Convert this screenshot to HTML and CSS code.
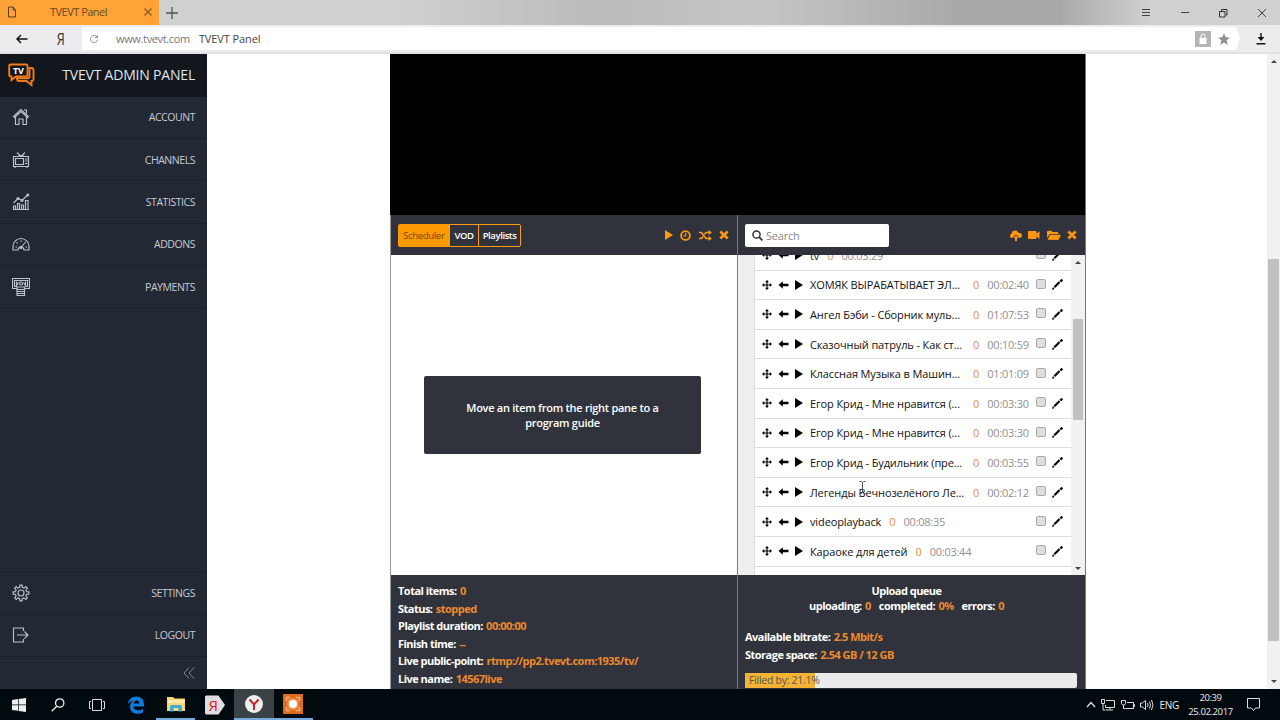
FILE: index.html
```html
<!DOCTYPE html>
<html lang="en">
<head>
    <meta charset="UTF-8" />
    <title>TVEVT Panel</title>
    <link rel="stylesheet" href="styles.css">
</head>
<body>
    <!-- ===== ICONS ===== -->
    <svg class="defs" width="0" height="0">
        <symbol id="move" viewBox="0 0 10 10"><path d="M5 0l2 2.200H5.600v2.200h2.200V3L10 5 7.800 7V5.600H5.600v2.200H7L5 10 3 7.800h1.400V5.600H2.200V7L0 5l2.200-2v1.400h2.200V2.200H3z"/></symbol>
        <symbol id="left" viewBox="0 0 10 8"><path d="M0 4L4.300.3v2.500H10v2.400H4.300v2.500z"/></symbol>
        <symbol id="play" viewBox="0 0 8 10"><path d="M0 0L8 5 0 10z"/></symbol>
        <symbol id="pencil" viewBox="0 0 12 12"><path d="M0 12l1-3.200L2.900 11zM1.700 8.300l5.800-5.800 1.500 1.500L3.400 9.900zM8.200 1.800L9.900.2q.6-.4 1.200.2l.5.6q.5.6 0 1.100L10 3.600z"/></symbol>
        <symbol id="cross" viewBox="0 0 10 10"><path d="M2.300.5L5 3.200 7.700.5l1.900 1.900L7 5l2.600 2.600-1.900 1.900L5 6.800 2.300 9.500.4 7.600 3 5 .4 2.400z"/></symbol>
    </svg>

    <!-- ===== BROWSER ===== -->
    <div class="tabbar">
        <div class="tab">
            <svg width="10" height="12" viewBox="0 0 10 12"><path d="M1.500 1h4.500l2.500 3v7h-7zM6 1v3h2.500" fill="none" stroke="#55401f"/></svg>
            <span>TVEVT Panel</span>
            <svg width="8" height="8" viewBox="0 0 8 8"><path d="M.5.5l7 7M7.500.5l-7 7" stroke="#8a5a1d" stroke-width="1.200"/></svg>
        </div>
        <svg class="newtab" width="12" height="12" viewBox="0 0 12 12"><path d="M6 0v12M0 6h12" stroke="#555" stroke-width="1.300"/></svg>
        <div class="winbtns">
            <svg width="10" height="10" viewBox="0 0 10 10"><path d="M1 1.500h8M1 4.500h8M1 7.500h8" stroke="#444"/></svg>
            <svg width="10" height="10" viewBox="0 0 10 10"><path d="M1 4.500h8" stroke="#444"/></svg>
            <svg width="10" height="10" viewBox="0 0 10 10"><path d="M1.500 3.500h5.500v5.500h-5.500zM3.500 3V1.500H9v5.500H7.500" fill="none" stroke="#333"/></svg>
            <svg width="10" height="10" viewBox="0 0 10 10"><path d="M1 1l8 8M9 1l-8 8" stroke="#444"/></svg>
        </div>
    </div>
    <div class="toolbar">
        <svg class="back" width="12" height="10" viewBox="0 0 12 10"><path d="M11.500 5H1.500M5 1L1 5l4 4" fill="none" stroke="#111" stroke-width="1.500"/></svg>
        <span class="ya">Я</span>
        <div class="address">
            <svg width="10" height="10" viewBox="0 0 10 10"><path d="M8.200 3.200A3.600 3.600 0 1 0 8.600 5.500M8.500.8v2.700H5.800" fill="none" stroke="#999"/></svg>
            <span class="host">www.tvevt.com</span>
            <span class="title">TVEVT Panel</span>
            <svg class="lock" width="16" height="16" viewBox="0 0 16 16"><path d="M0 0h16v16H0z" fill="#b5b5b5"/><path d="M4.500 7h7v6h-7z" fill="#fff"/><path d="M6 7V5q0-2 2-2t2 2v2" fill="none" stroke="#fff"/></svg>
            <svg class="star" width="12" height="12" viewBox="0 0 12 12"><path d="M6 0l1.600 4.200L12 4.500 8.600 7.300 9.700 12 6 9.400 2.300 12l1.100-4.700L0 4.500l4.400-.3z" fill="#8f8f8f"/></svg>
        </div>
        <svg class="download" width="10" height="12" viewBox="0 0 10 12"><path d="M4.300 0h1.400v4H8.500L5 8 1.500 4h2.800zM.5 10h9v1.500h-9z" fill="#111"/></svg>
    </div>

    <div class="page">
        <!-- ===== SIDEBAR ===== -->
        <nav class="sidebar">
            <div class="brand">
                <svg width="28" height="26" viewBox="0 0 28 26" fill="none" stroke="#ef7d1a" stroke-width="1.900"><path d="M3 2.500h15q1.500 0 1.500 1.500v9q0 1.500-1.500 1.500H8L3.500 18v-3.500Q1.200 14.500 1.200 13V4q0-1.500 1.800-1.500z"/><path d="M21.500 6H23q2.500 0 2.500 2v9q0 2-2 2v4L18.500 19H11q-2 0-2-2v-.8h10.500q2 0 2-2z"/><text x="5" y="11.800" class="logo-text">TV</text></svg>
                <span>TVEVT ADMIN PANEL</span>
            </div>
            <a class="item"><svg width="18" height="18" viewBox="0 0 18 18"><path d="M1.500 8.500L9 1.500l7.500 7-1 1L9 3.500l-6.500 6zM3.500 9v7.500H7V11h4v5.500h3.500V9M12 2h2.500v3.500"/></svg>ACCOUNT</a>
            <a class="item"><svg width="18" height="18" viewBox="0 0 18 18"><path d="M1.500 5.500h15v10h-15zM3.500 7.500h8v6h-8zM3 15.500v1.500M15 15.500v1.500M9 5.500l-4-4M9 5.500l4-4M6.500 4.500h5M13 8h2.500M13 10h2.500M13 12.500h2.500"/></svg>CHANNELS</a>
            <a class="item"><svg width="18" height="18" viewBox="0 0 18 18"><path d="M1 16.500h16M1.500 16v-3h2v3M5.500 16v-5.500h2V16M9.500 16v-4h2v4M13.500 16V7.500h2.500V16M1.500 10L6 5.500l4 2L16 1.500"/><circle cx="6" cy="5.500" r="1"/><circle cx="10" cy="7.500" r="1"/><circle cx="15.800" cy="2" r="1"/></svg>STATISTICS</a>
            <a class="item"><svg width="18" height="18" viewBox="0 0 18 18"><path d="M1 15v-3.500a8 8 0 0 1 16 0V15h-5a3 3 0 0 0-6 0zM3.500 12h1.500M13.500 12H15M4.500 7.500l1.200 1M9 5.500V7M13.500 7L9 12.500"/><circle cx="9" cy="12.500" r="1.200"/></svg>ADDONS</a>
            <a class="item"><svg width="18" height="18" viewBox="0 0 18 18"><path d="M5 10.500H.5V.5h17v10H13M4.500 8.500h-2v-6h13v6h-2M5 9h7.500v8.500H5zM5 11.500h7.500M5 13.500h7.500M5 15.500h7.500"/><circle cx="9" cy="5.500" r="1.500"/><path d="M4.500 3.500v4l2-3M13.500 3.500v4l-2-3"/></svg>PAYMENTS</a>
            <div class="spacer"></div>
            <a class="item first"><svg width="18" height="18" viewBox="0 0 18 18"><path d="M7.700 3.400 7.900 1.100 10.100 1.100 10.300 3.400 12 4.100 13.800 2.600 15.400 4.200 13.900 6 14.600 7.700 16.900 7.900 16.900 10.100 14.600 10.300 13.900 12 15.400 13.800 13.800 15.400 12 13.900 10.300 14.600 10.100 16.900 7.900 16.900 7.700 14.600 6 13.900 4.200 15.400 2.600 13.800 4.100 12 3.400 10.300 1.100 10.100 1.100 7.900 3.400 7.700 4.100 6 2.600 4.200 4.200 2.600 6 4.100Z"/><circle cx="9" cy="9" r="3"/></svg>SETTINGS</a>
            <a class="item"><svg width="18" height="18" viewBox="0 0 18 18"><path d="M11.500 5V2H1.500v14h10v-3M5 9h11M12.500 5.500L16 9l-3.500 3.500"/></svg>LOGOUT</a>
            <div class="collapse"><svg width="12" height="12" viewBox="0 0 12 12"><path d="M6 .5L1 6l5 5.500M11 .5L6 6l5 5.500" fill="none" stroke="#858a96"/></svg></div>
        </nav>

        <!-- ===== CONTENT ===== -->
        <main class="content">
            <div class="panel">
                <div class="video"></div>
                <div class="columns">
                    <section class="col">
                        <div class="bar">
                            <div class="tabs"><b class="active">Scheduler</b><b>VOD</b><b>Playlists</b></div>
                            <div class="actions left-actions">
                                <svg width="8" height="10"><use href="#play"/></svg>
                                <svg width="11" height="11" viewBox="0 0 11 11" fill="none" stroke="currentColor"><circle cx="5.500" cy="5.500" r="4.400" stroke-width="1.800"/><path d="M5.700 2.800v3H3.500" stroke-width="1.200"/></svg>
                                <svg width="13" height="11" viewBox="0 0 13 11"><path d="M0 2.500h2.500l4.500 6h3M0 8.500h2.500l1.500-2M5.500 4.200L7 2.500h3" fill="none" stroke="currentColor" stroke-width="1.700"/><path d="M9.500 0L13 2.500 9.500 5zM9.500 6L13 8.500 9.500 11z"/></svg>
                                <svg width="10" height="10"><use href="#cross"/></svg>
                            </div>
                        </div>
                        <div class="body">
                            <div class="hint">Move an item from the right pane to a<br>program guide</div>
                        </div>
                        <div class="info">
                            <p>Total items: <i>0</i></p>
                            <p>Status: <i>stopped</i></p>
                            <p>Playlist duration: <i>00:00:00</i></p>
                            <p>Finish time: <i>--</i></p>
                            <p>Live public-point: <i>rtmp://pp2.tvevt.com:1935/tv/</i></p>
                            <p>Live name: <i>14567live</i></p>
                        </div>
                    </section>
                    <section class="col">
                        <div class="bar">
                            <div class="search">
                                <svg width="11" height="11" viewBox="0 0 11 11" fill="none" stroke="#333"><circle cx="4.500" cy="4.500" r="3.600" stroke-width="1.500"/><path d="M7.200 7.200L10.300 10.300" stroke-width="1.800"/></svg>
                                <span>Search</span>
                            </div>
                            <div class="actions right-actions">
                                <svg width="12" height="11" viewBox="0 0 12 11"><path d="M2.700 8Q0 8 0 5.700 0 4 1.700 3.400 2.200.6 5 .6q2.500 0 3.400 2.200 3.300-.1 3.600 2.800 0 2.400-2.700 2.400H8.500L9 7.500 6 4.200 3 7.500zM6 5.300L8.400 8H7v3H5V8H3.600z"/></svg>
                                <svg width="12" height="10" viewBox="0 0 12 10"><path d="M1 1h6.500q1 0 1 1v1.700L11.500 1v8L8.500 6.300V8q0 1-1 1H1Q0 9 0 8V2q0-1 1-1z"/></svg>
                                <svg width="14" height="11" viewBox="0 0 14 11"><path d="M0 8V2q0-1.200 1.200-1.200H4q1 0 1.200 1.200H10q1.300 0 1.300 1.200V4H4Q2.500 4 1.800 5.300zM.5 9.800L2.600 5.500q.4-.8 1.400-.8h9.300q.7 0 .4.800l-1.900 3.700q-.4.800-1.300.8z"/></svg>
                                <svg width="10" height="10"><use href="#cross"/></svg>
                            </div>
                        </div>
                        <div class="body library">
                            <div class="rows" id="rows"></div>
                            <div class="scroll inner"><div class="thumb"></div></div>
                            <svg class="caret" width="7" height="13" viewBox="0 0 7 13"><path d="M.5.5h2l1 1 1-1h2M3.500 1v11M.5 12.500h2l1-1 1 1h2" fill="none" stroke="#555"/></svg>
                        </div>
                        <div class="info">
                            <div class="queue">Upload queue<br><span>uploading: <i>0</i></span><span>completed: <i>0%</i></span><span>errors: <i>0</i></span></div>
                            <p>Available bitrate: <i>2.5 Mbit/s</i></p>
                            <p>Storage space: <i>2.54 GB / 12 GB</i></p>
                            <div class="storage"><div class="fill">Filled by: 21.1%</div></div>
                        </div>
                    </section>
                </div>
            </div>
        </main>
        <div class="scroll outer"><div class="thumb"></div></div>
    </div>

    <!-- ===== TASKBAR ===== -->
    <footer class="taskbar">
        <div class="app"><svg width="14" height="14" viewBox="0 0 14 14" fill="#fff"><path d="M0 2l6-.9v5.500H0zM6.700 1L14 0v6.600H6.700zM0 7.300h6v5.500L0 12zM6.700 7.300H14V14l-7.300-1z"/></svg></div>
        <div class="app"><svg width="14" height="14" viewBox="0 0 14 14" fill="none" stroke="#eee" stroke-width="1.300"><circle cx="8.700" cy="5" r="4.200"/><path d="M5.700 8.200L.7 13.300"/></svg></div>
        <div class="app"><svg width="16" height="12" viewBox="0 0 16 12" fill="none" stroke="#ddd"><path d="M3.500.5h9v11h-9zM2 2.500H.5v7H2M14 2.500h1.500v7H14"/></svg></div>
        <div class="app"><svg width="16" height="18" viewBox="0 0 16 18"><path d="M0 8Q1 .5 8.300.5 15.700.7 16 8.300V10.500H5.500q.3 3.700 4.500 3.800 2.800 0 5-1.300v3.600Q12.500 18 9 17.800 2.300 17.300 2 10.700 2 6.500 6 4.700 2.200 5.200 0 8zM5.700 7.500h5.500Q11.200 4.500 8.700 4.500 6.200 4.600 5.700 7.500z" fill="#0c7bdc"/></svg></div>
        <div class="app open"><svg width="18" height="16" viewBox="0 0 18 16"><path d="M0 1h6l1.500 1.500H18V15H0z" fill="#f7d774"/><path d="M1 4h16v3H1z" fill="#fdebae"/><path d="M3 15.500V11q0-2 2-2h8q2 0 2 2v4.500h-3.500V12h-5v3.500z" fill="#3fa9d8"/></svg></div>
        <div class="app"><svg width="20" height="20" viewBox="0 0 20 20"><path d="M0 2q0-1.500 1.500-1.500h12L20 10l-6.500 9.500h-12Q0 19.500 0 18z" fill="#dedede"/><text x="3.500" y="15.500" class="ya-red">Я</text></svg></div>
        <div class="app open current"><svg width="18" height="18" viewBox="0 0 18 18"><circle cx="9" cy="9" r="9" fill="#eee"/><path d="M4.500 4.500L9 9.500l4.500-5M9 9v6" fill="none" stroke="#c4232c" stroke-width="2"/></svg></div>
        <div class="app open"><svg width="20" height="20" viewBox="0 0 20 20"><path d="M0 0h20v20H0z" fill="#dd6b20"/><path d="M3.500 7V3.500H7M13 3.500h3.500V7M16.500 13v3.500H13M7 16.500H3.500V13" fill="none" stroke="#f3ae78" stroke-width="1.500"/><circle cx="10" cy="10" r="6" fill="#f09550"/><circle cx="10" cy="10" r="4" fill="#fff"/></svg></div>
        <div class="tray">
            <svg width="10" height="7" viewBox="0 0 10 7"><path d="M1 6l4-4.500L9 6" fill="none" stroke="#ddd" stroke-width="1.300"/></svg>
            <svg width="14" height="12" viewBox="0 0 14 12" fill="none" stroke="#ddd"><path d="M5 1.500h8.500v7H4.500V6M9 8.500v2M5 11h7M.5.5h3v4h-3zM2 4.500V11h2.500"/></svg>
            <svg width="14" height="12" viewBox="0 0 14 12" fill="none" stroke="#ddd"><path d="M6 3.500h6.500v6h-8M12.500 5.500h1v2h-1M.5 1.500h4v3l-1 1.500h-2L.5 4.500zM2.500 6v3.500h2"/></svg>
            <svg width="14" height="12" viewBox="0 0 14 12" fill="none" stroke="#ddd"><path d="M.5 4h2L5.500 1.500v9L2.500 8h-2zM7.500 4q1 2 0 4M9.500 2.500q2 3.500 0 7M11.500 1q3 5 0 10"/></svg>
            <span class="lang">ENG</span>
            <span class="clock">20:39<br>25.02.2017</span>
            <svg width="13" height="14" viewBox="0 0 13 14" fill="none" stroke="#ddd"><path d="M.5.5h12v9.500H8.500L6.500 12.500 4.500 10H.5z"/></svg>
        </div>
    </footer>

    <script>
        const items = [
            ["tv", "00:03:29"],
            ["ХОМЯК ВЫРАБАТЫВАЕТ ЭЛ...", "00:02:40"],
            ["Ангел Бэби - Сборник муль...", "01:07:53"],
            ["Сказочный патруль - Как ст...", "00:10:59"],
            ["Классная Музыка в Машин...", "01:01:09"],
            ["Егор Крид - Мне нравится (...", "00:03:30"],
            ["Егор Крид - Мне нравится (...", "00:03:30"],
            ["Егор Крид - Будильник (пре...", "00:03:55"],
            ["Легенды Вечнозелёного Ле...", "00:02:12"],
            ["videoplayback", "00:08:35"],
            ["Караоке для детей", "00:03:44"]
        ];
        const icon = (id, w, h) => `<svg class="${id}" width="${w}" height="${h}"><use href="#${id}"/></svg>`;

        document.getElementById('rows').innerHTML = items.map(([name, time]) => `
            <div class="row">
                ${icon('move', 10, 10)}${icon('left', 11, 8)}${icon('play', 8, 10)}
                <span class="name${name.endsWith('...') ? ' long' : ''}">${name}</span>
                <span class="count">0</span>
                <span class="time">${time}</span>
                <span class="check"></span>
                ${icon('pencil', 11, 11)}
            </div>`).join('') + '<div class="row"></div>';
    </script>
</body>
</html>
```
FILE: styles.css
```css
*{box-sizing:border-box;}
body{
    margin:0;width:1280px;height:720px;overflow:hidden;
    display:flex;flex-direction:column;background:#fff;
    font-family:"Open Sans","Noto Sans",sans-serif;font-size:11px;
}
svg{display:block;flex:none;fill:currentColor;}
svg[fill="none"]{fill:none;}
.defs{position:absolute;}
i{font-style:normal;}
p{margin:0;}

/* Browser */
.tabbar{
    height:25px;flex:none;display:flex;align-items:center;
    background:linear-gradient(90deg,#cfd1cf 0,#cfd1cf 400px,#b9bbb9 600px,#c4c6c4 760px,#a8aaa8 960px,#a8aaa8 1060px,#cfd1cf 1150px);
}
.tab{
    width:159px;height:25px;padding:0 7px 2px;background:#ffa237;
    display:flex;align-items:center;justify-content:space-between;
    color:#6b4a20;letter-spacing:-.5px;
}
.tab span{margin-right:4px;}
.newtab{margin-left:7px;}
.winbtns{margin-left:auto;display:flex;gap:28.500px;padding-right:13.500px;}
.toolbar{
    height:29px;flex:none;display:flex;align-items:center;
    background:#ececee;border-bottom:2px solid #e2e2e2;
}
.back{margin-left:16px;}
.ya{width:14px;margin:0 15px 0 27px;font-size:17px;line-height:20px;color:#333;transform:scaleX(.75);}
.address{
    width:1158px;height:23px;padding-left:7px;background:#fff;
    display:flex;align-items:center;margin-left:-2px;
    clip-path:polygon(0 0,1154px 0,100% 50%,1154px 100%,0 100%);
}
.host{margin-left:17px;color:#777;letter-spacing:-.35px;}
.title{margin-left:9px;color:#444;letter-spacing:-.1px;}
.lock{margin-left:auto;}
.star{margin:0 10px 0 7px;}
.download{margin-left:16px;}

.page{height:635px;flex:none;display:flex;}

/* Sidebar */
.sidebar{
    width:207px;background:#222834;color:#c8ccd4;
    display:flex;flex-direction:column;
}
.brand{
    height:42.500px;flex:none;padding:0 12px 0 8px;background:#14161d;
    display:flex;align-items:center;justify-content:space-between;
    font-size:14px;line-height:18px;color:#dfe5ea;letter-spacing:-.2px;
}
.logo-text{font:bold 9px "Open Sans",sans-serif;fill:#fff;stroke:none;}
.item{
    height:42.400px;flex:none;padding:0 12px;border-bottom:1px solid #1a1f29;
    display:flex;align-items:center;justify-content:space-between;
    font-size:10.500px;letter-spacing:-.45px;
}
.item.first{border-top:1px solid #1a1f29;}
.item svg{fill:none;stroke:#bcc1cb;stroke-width:1.150;}
.spacer{flex:1;}
.collapse{height:32px;flex:none;display:flex;align-items:center;justify-content:flex-end;padding-right:12px;}

/* Panel */
.content{flex:1;display:flex;padding-left:183px;}
.panel{width:696px;display:flex;flex-direction:column;border-right:1px solid #777;}
.video{height:161px;background:#000;}
.columns{flex:1;display:flex;}
.col{width:347px;display:flex;flex-direction:column;}
.col:first-child{width:348px;border-left:1px solid #999;border-right:1px solid #777;}
.bar{
    height:40px;flex:none;padding:0 8px 0 7px;background:#30333c;
    display:flex;align-items:center;justify-content:space-between;
}
.tabs{display:flex;height:23px;border:1px solid #ff9c10;border-radius:2px;}
.tabs b{
    padding:0 4px;line-height:21px;font-size:9.500px;font-weight:600;color:#fff;
    border-left:1px solid #ff9c10;letter-spacing:-.4px;
}
.tabs .active{padding:0 5px 0 4px;background:#ff9900;color:#70491a;font-weight:400;border-left:0;letter-spacing:-.3px;}
.actions{display:flex;align-items:center;color:#ff9713;}
.left-actions{gap:7.500px;}
.right-actions{gap:6.500px;}
.search{
    width:144px;height:23px;padding-left:7px;border-radius:2px;background:#fff;
    display:flex;align-items:center;gap:3px;color:#888;letter-spacing:-.2px;
}
.body{height:320px;flex:none;background:#fff;overflow:hidden;}
.col:first-child .body{display:flex;align-items:center;justify-content:center;padding-right:3px;}
.hint{
    width:277px;height:78px;border-radius:2px;background:#30333c;color:#fff;
    display:flex;align-items:center;justify-content:center;text-align:center;
    font-weight:600;line-height:15px;letter-spacing:-.27px;
}

/* Library */
.library{position:relative;display:flex;padding-left:16px;background:#eee;}
.rows{width:317px;margin-top:-14px;background:#fff;border-left:1px solid #ddd;}
.row{
    height:29.600px;padding:0 8px 0 7px;border-bottom:1px solid #ddd;
    display:flex;align-items:center;color:#000;
}
.row .left{margin-left:6px;}
.row .play{margin:0 7px 0 6px;}
.name{white-space:nowrap;color:#111;letter-spacing:-.12px;font-weight:500;}
.name.long{width:155px;}
.count{margin:0 8px;color:#ee8f35;}
.time{color:#8f8f8f;letter-spacing:-.25px;font-weight:500;}
.check{width:10px;height:10px;margin:-2px 6px 0 auto;border:1px solid #aaa;border-radius:2px;background:#dedede;}
.caret{position:absolute;left:121px;top:226px;}

/* Scrollbars */
.scroll{display:flex;flex-direction:column;align-items:center;background:#f1f1f1;}
.scroll::before,.scroll::after{content:"";border:3px solid transparent;}
.scroll::before{border-bottom-color:#444;border-top:0;}
.scroll::after{border-top-color:#444;border-bottom:0;margin-top:auto;}
.inner{width:14px;padding:6px 0 5px;}
.inner .thumb{width:10px;height:101px;margin-top:55px;background:#c1c1c1;}
.outer{width:13px;padding:6px 0;}
.outer .thumb{width:11px;height:382px;margin-top:196px;background:#c1c1c1;}

/* Info */
.info{flex:1;padding:7px 7px 0;background:#30333c;color:#fff;font-weight:700;letter-spacing:-.52px;}
.info p{line-height:17.600px;}
.info i{color:#ee8a2b;margin-left:1px;}
.queue{text-align:center;line-height:15px;margin:1px 0 15px;padding-right:10px;}
.queue span{margin:0 4px;}
.storage{width:332px;height:15px;margin-top:10px;border-radius:2px;background:#ebebeb;}
.fill{width:21.100%;height:15px;padding-left:4px;background:#f5b335;color:#555;line-height:15px;white-space:nowrap;font-weight:400;font-size:10.500px;letter-spacing:-.27px;}

/* Taskbar */
.taskbar{height:31px;flex:none;display:flex;background:#010a0f;color:#eee;}
.app{width:39.200px;display:flex;align-items:center;justify-content:center;}
.app:first-child{width:38.500px;}
.open{border-bottom:2px solid #76a9dc;}
.current{background:#3a4246;}
.ya-red{font:15px "Open Sans",sans-serif;fill:#e01b1b;}
.tray{margin-left:auto;padding-right:20px;display:flex;align-items:center;gap:5.500px;font-size:10px;}
.lang{letter-spacing:-.3px;}
.clock{width:52px;margin-right:5px;text-align:center;line-height:14px;font-size:9.500px;letter-spacing:-.4px;}
```
